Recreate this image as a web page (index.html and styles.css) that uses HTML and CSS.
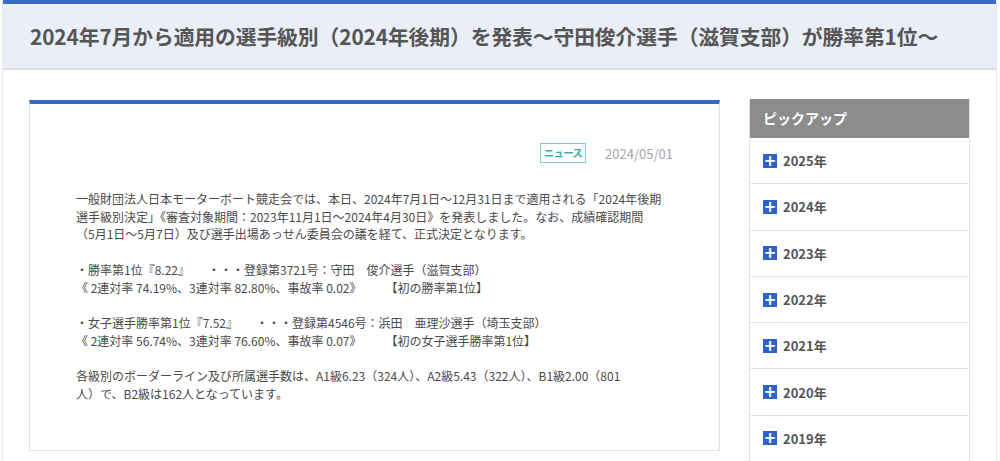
FILE: index.html
```html
<!DOCTYPE html>
<html>
<head>
    <title>選手級別</title>
    <link rel="stylesheet" href="styles.css">
</head>
<body>
<div class="page">

    <!-- Page Title -->
    <header class="title-bar">
        <h1>2024年7月から適用の選手級別（2024年後期）を発表～守田俊介選手（滋賀支部）が勝率第1位～</h1>
    </header>

    <div class="content">

        <!-- Article -->
        <article class="article">
            <div class="meta">
                <span class="tag">ニュース</span>
                <span class="date">2024/05/01</span>
            </div>
            <p class="text">
                一般財団法人日本モーターボート競走会では、本日、2024年7月1日～12月31日まで適用される「2024年後期<br>
                選手級別決定」《審査対象期間：2023年11月1日～2024年4月30日》を発表しました。なお、成績確認期間<br>
                （5月1日～5月7日）及び選手出場あっせん委員会の議を経て、正式決定となります。<br>
                <br>
                ・勝率第1位『8.22』　　・・・登録第3721号：守田　俊介選手（滋賀支部）<br>
                《 2連対率 74.19%、3連対率 82.80%、事故率 0.02》　　　【初の勝率第1位】<br>
                <br>
                ・女子選手勝率第1位『7.52』　　・・・登録第4546号：浜田　亜理沙選手（埼玉支部）<br>
                《 2連対率 56.74%、3連対率 76.60%、事故率 0.07》　　　【初の女子選手勝率第1位】<br>
                <br>
                各級別のボーダーライン及び所属選手数は、A1級6.23（324人）、A2級5.43（322人）、B1級2.00（801<br>
                人）で、B2級は162人となっています。
            </p>
        </article>

        <!-- Sidebar -->
        <aside class="sidebar">
            <div class="side-head">ピックアップ</div>
            <ul class="years">
                <li><span class="plus">+</span>2025年</li>
                <li><span class="plus">+</span>2024年</li>
                <li><span class="plus">+</span>2023年</li>
                <li><span class="plus">+</span>2022年</li>
                <li><span class="plus">+</span>2021年</li>
                <li><span class="plus">+</span>2020年</li>
                <li><span class="plus">+</span>2019年</li>
            </ul>
        </aside>

    </div>
</div>
</body>
</html>
```

FILE: styles.css
```css
body {
    margin: 0;
    padding: 0;
    background: #fff;
    font-family: "Noto Sans CJK JP", "Noto Sans", sans-serif;
    color: #4a4a4a;
}

.page {
    margin: 0 3px 0 2px;
    border-left: 1px solid #e8e8e8;
    border-right: 1px solid #e8e8e8;
    min-height: 461px;
}

/* Title bar */
.title-bar {
    border-top: 4px solid #3a6bc6;
    background-color: #e9eef7;
    border-bottom: 2px solid #dde1e7;
    height: 64px;
    display: flex;
    align-items: center;
    padding-left: 27px;
}

.title-bar h1 {
    margin: 0;
    font-size: 20.8px;
    font-weight: bold;
    color: #555;
    letter-spacing: -0.1px;
}

.content {
    display: flex;
    align-items: flex-start;
    gap: 29px;
    padding: 29px 26px 0 26px;
}

/* Article card */
.article {
    width: 691px;
    box-sizing: border-box;
    border: 1px solid #e4e4e4;
    border-top: 4px solid #3467c9;
    padding: 39px 46px 48px 46px;
    margin-top: 1px;
}

.meta {
    display: flex;
    justify-content: flex-end;
    align-items: center;
    gap: 19px;
}

.tag {
    border: 1px solid #7fcfca;
    color: #3bb0a8;
    font-size: 10.5px;
    font-weight: bold;
    letter-spacing: -0.8px;
    padding: 0 3px 0 3px;
    line-height: 18px;
}

.date {
    color: #a6a6a6;
    font-size: 13px;
}

.text {
    margin: 27px 0 0 0;
    font-size: 12px;
    line-height: 17.7px;
    color: #4a4a4a;
}

/* Sidebar */
.sidebar {
    width: 221px;
    box-sizing: border-box;
    border-left: 1px solid #e4e4e4;
    border-right: 1px solid #e4e4e4;
}

.side-head {
    background-color: #8c8c8c;
    color: #fff;
    font-size: 14px;
    font-weight: bold;
    height: 39px;
    line-height: 39px;
    padding-left: 13px;
}

.years {
    list-style: none;
    margin: 0;
    padding: 0;
}

.years li {
    display: flex;
    align-items: center;
    gap: 6px;
    height: 45.3px;
    border-bottom: 1px solid #e4e4e4;
    padding-left: 13px;
    font-size: 13px;
    font-weight: bold;
    color: #555;
}

.plus {
    width: 14px;
    height: 14px;
    background-color: #2f62c9;
    color: #fff;
    font-size: 15px;
    line-height: 14px;
    text-align: center;
    font-family: "DejaVu Sans", sans-serif;
    font-weight: bold;
}
```
